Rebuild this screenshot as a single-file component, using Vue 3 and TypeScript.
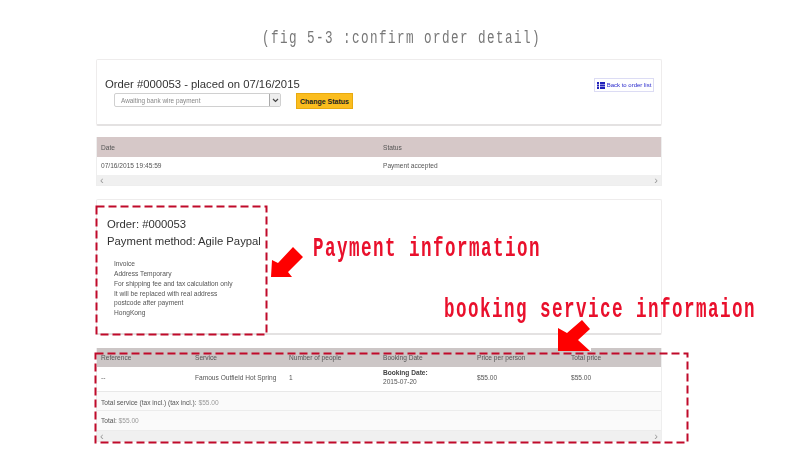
<template>
  <div class="page">
    <div class="fig-title"><span>(fig 5-3 :confirm order detail)</span></div>

    <div class="content">
      <section class="card head-card">
        <div class="head-left">
          <h3>Order #000053 - placed on 07/16/2015</h3>
          <div class="status-form">
            <div class="select">
              <span>Awaiting bank wire payment</span>
              <i class="select-btn">
                <svg width="7" height="5" viewBox="0 0 7 5"><path d="M1 1l2.5 2.5L6 1" fill="none" stroke="#444" stroke-width="1.2" /></svg>
              </i>
            </div>
            <button class="change-btn">Change Status</button>
          </div>
        </div>
        <a class="back-link">
          <svg width="8" height="7" viewBox="0 0 8 7"><path d="M0 0h2v2H0zM3 0h5v2H3zM0 2.5h2v2H0zM3 2.5h5v2H3zM0 5h2v2H0zM3 5h5v2H3z" fill="#2222bb" /></svg>
          Back to order list
        </a>
      </section>

      <section class="table-box history">
        <div class="tr th two"><span>Date</span><span>Status</span></div>
        <div class="tr two history-row"><span>07/16/2015 19:45:59</span><span>Payment accepted</span></div>
        <div class="scroll"><span>‹</span><span>›</span></div>
      </section>

      <section class="card pay-card">
        <h4>Order: #000053</h4>
        <h4>Payment method: Agile Paypal</h4>
        <ul>
          <li v-for="line in address" :key="line">{{ line }}</li>
        </ul>
      </section>

      <section class="table-box booking">
        <div class="tr th six booking-head"><span v-for="col in columns" :key="col">{{ col }}</span></div>
        <div class="tr six booking-row">
          <span>--</span>
          <span>Famous Outfield Hot Spring</span>
          <span>1</span>
          <span><b>Booking Date:</b><br />2015-07-20</span>
          <span>$55.00</span>
          <span>$55.00</span>
        </div>
        <div class="total first">Total service (tax incl.) (tax incl.): <em>$55.00</em></div>
        <div class="total">Total: <em>$55.00</em></div>
        <div class="scroll"><span>‹</span><span>›</span></div>
      </section>
    </div>

    <!-- annotations drawn over the page -->
    <svg class="marks" width="800" height="450" viewBox="0 0 800 450">
      <rect x="96.5" y="206.5" width="170" height="128" class="dash" />
      <rect x="95.5" y="353.5" width="592" height="89" class="dash" />
      <path d="M271 277L272 260L278 263L293 247L303 257L288 272L292 277Z" fill="#fe0000" />
      <path d="M580 351L591 351L591 347L580 347Z" fill="#fff" />
      <path d="M558 351L558 328L567 333L582 320L590 329L578 340L590 351Z" fill="#fe0000" />
    </svg>
    <div class="note note-pay"><span>Payment information</span></div>
    <div class="note note-booking"><span>booking service informaion</span></div>
  </div>
</template>

<script setup lang="ts">
const address: string[] = [
  'Invoice',
  'Address Temporary',
  'For shipping fee and tax calculation only',
  'It will be replaced with real address',
  'postcode after payment',
  'HongKong',
]

const columns: string[] = [
  'Reference',
  'Service',
  'Number of people',
  'Booking Date',
  'Price per person',
  'Total price',
]
</script>

<style>
html,
body {
  margin: 0;
  background: #fff;
}
</style>

<style scoped>
.page {
  position: relative;
  width: 800px;
  height: 450px;
  overflow: hidden;
  padding: 59px 138px 0 96px;
  box-sizing: border-box;
  font-family: "Liberation Sans", Arial, sans-serif;
  color: #666;
  background: #fff;
}

.content {
  filter: blur(0.3px);
}

.fig-title {
  position: absolute;
  left: 262px;
  top: 26px;
  font-family: "Liberation Mono", monospace;
  font-size: 18px;
  line-height: 24px;
  color: #777;
  white-space: nowrap;
  filter: blur(0.2px);
}

.fig-title span,
.note span {
  display: inline-block;
  transform-origin: left top;
}

.fig-title span {
  letter-spacing: 2.06px;
  transform: scaleX(0.7);
}

.card {
  background: #fff;
  border: 1px solid #eeecec;
  border-bottom: 2px solid #e4e2e2;
  border-radius: 2px;
  box-sizing: border-box;
}

.head-card {
  height: 67px;
  display: flex;
  justify-content: space-between;
  padding: 17px 7px 0 8px;
}

.head-left h3 {
  margin: 0;
  font-size: 11.3px;
  font-weight: 400;
  line-height: 14px;
  color: #333;
}

.status-form {
  display: flex;
  gap: 15px;
  margin: 2px 0 0 9px;
}

.select {
  width: 167px;
  height: 14px;
  box-sizing: border-box;
  border: 1px solid #d0d0d0;
  border-radius: 2px;
  display: flex;
  justify-content: space-between;
  align-items: center;
  padding-left: 6px;
  font-size: 6.4px;
  color: #888;
}

.select-btn {
  width: 10px;
  height: 12px;
  background: #eee;
  border-left: 1px solid #aaa;
  display: flex;
  align-items: center;
  justify-content: center;
}

.change-btn {
  width: 57px;
  height: 16px;
  padding: 0;
  border: 1px solid #e8aa10;
  background: #fbbd1e;
  font-family: inherit;
  font-size: 7px;
  font-weight: 700;
  color: #222;
}

.back-link {
  align-self: flex-start;
  margin-top: 1px;
  width: 60px;
  height: 14px;
  box-sizing: border-box;
  border: 1px solid #dcdcf4;
  display: flex;
  align-items: center;
  justify-content: center;
  gap: 2px;
  font-size: 6px;
  color: #2a2acc;
  white-space: nowrap;
}

.table-box {
  width: 566px;
  box-sizing: border-box;
  border: 1px solid #eee;
  border-top: 0;
  background: #fff;
}

.history {
  margin-top: 11px;
}

.tr {
  display: grid;
  align-items: center;
  padding-left: 4px;
  font-size: 6.6px;
  color: #555;
}

.two {
  grid-template-columns: 282px 1fr;
}

.six {
  grid-template-columns: repeat(6, 94px);
}

.th {
  height: 20px;
  background: #d6c8c8;
  color: #555;
}

.history-row {
  height: 18px;
  padding-bottom: 2px;
  box-sizing: border-box;
}

.scroll {
  height: 10px;
  background: #f0f0f0;
  display: flex;
  justify-content: space-between;
  align-items: center;
  padding: 0 3px;
  font-size: 11px;
  line-height: 10px;
  color: #999;
}

.pay-card {
  height: 136px;
  margin-top: 13px;
  padding: 18px 0 0 10px;
}

.pay-card h4 {
  margin: 0 0 4px;
  font-size: 11.3px;
  font-weight: 400;
  line-height: 13px;
  color: #333;
}

.pay-card ul {
  list-style: none;
  margin: 11px 0 0 7px;
  padding: 0;
  font-size: 6.65px;
  line-height: 9.85px;
  color: #555;
}

.booking {
  margin-top: 13px;
}

.booking-head {
  height: 19px;
  background: #ccc6c6;
}

.booking-row {
  height: 25px;
  padding-bottom: 2px;
  line-height: 8.6px;
  border-bottom: 1px solid #e8e8e8;
  box-sizing: border-box;
}

.booking-row b {
  color: #444;
}

.total {
  height: 20px;
  box-sizing: border-box;
  padding-left: 4px;
  font-size: 6.6px;
  line-height: 19px;
  color: #555;
  background: #fafafa;
  border-bottom: 1px solid #ececec;
}

.total.first {
  height: 19px;
  line-height: 21px;
}

.total em {
  font-style: normal;
  color: #999;
}

.marks {
  position: absolute;
  left: 0;
  top: 0;
}

.dash {
  fill: none;
  stroke: #c00a2a;
  stroke-width: 2;
  stroke-dasharray: 8 4;
}

.note {
  position: absolute;
  font-family: "Liberation Mono", monospace;
  font-weight: 700;
  font-size: 27px;
  line-height: 30px;
  color: #e9102c;
  white-space: nowrap;
  filter: blur(0.2px);
}

.note span {
  letter-spacing: 2.26px;
  transform: scaleX(0.65);
}

.note-pay {
  left: 313px;
  top: 234px;
}

.note-booking {
  left: 444px;
  top: 295px;
}
</style>
